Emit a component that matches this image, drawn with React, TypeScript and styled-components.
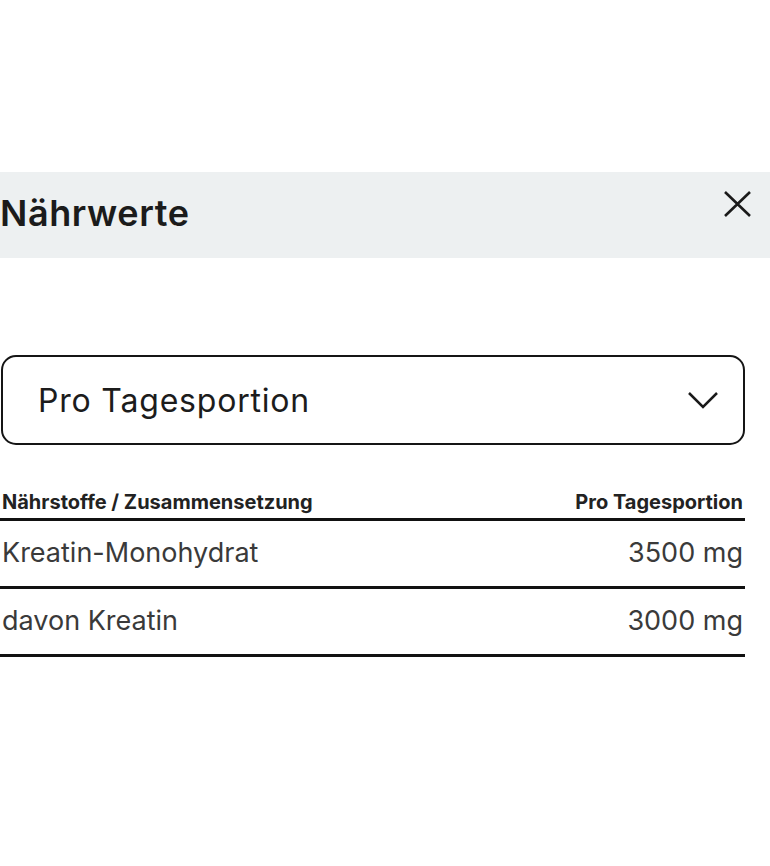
import React from "react";
import styled, { createGlobalStyle } from "styled-components";

const Global = createGlobalStyle`
  html, body { margin: 0; padding: 0; background: #ffffff; }
  body { font-family: Inter, "Noto Sans", Arial, sans-serif; color: #1a1a1a; }
  * { box-sizing: border-box; }
`;

const Page = styled.div`
  width: 770px;
  min-height: 866px;
  padding-top: 172px;
  overflow: hidden;
`;

const Header = styled.div`
  height: 86px;
  background: #edf0f1;
  display: flex;
  align-items: center;
  justify-content: space-between;
  padding: 0 18px 0 0;
`;

const Title = styled.h2`
  margin: -4px 0 0 0;
  font-size: 36px;
  font-weight: 600;
  letter-spacing: 0.6px;
  color: #1b1b1b;
`;

const CloseBtn = styled.button`
  border: 0;
  background: transparent;
  padding: 0;
  width: 30px;
  height: 30px;
  display: flex;
  align-items: center;
  justify-content: center;
  margin-top: -22px;
`;

const Body = styled.div`
  padding: 97px 25px 0 0;
`;

const Select = styled.div`
  height: 90px;
  margin-left: 1px;
  border: 2.5px solid #151515;
  border-radius: 15px;
  display: flex;
  align-items: center;
  justify-content: space-between;
  padding: 0 24px 0 35px;
`;

const SelectText = styled.span`
  font-size: 32px;
  font-weight: 400;
  letter-spacing: 0.8px;
  color: #1c1c1c;
`;

const Table = styled.div`
  margin-top: 44px;
`;

const Row = styled.div<{ $head?: boolean }>`
  display: flex;
  justify-content: space-between;
  align-items: ${(p) => (p.$head ? "flex-end" : "center")};
  border-bottom: 3px solid #111;
  height: ${(p) => (p.$head ? "32px" : "68px")};
  padding: ${(p) => (p.$head ? "0 2px 4px 2px" : "0 2px 2px 2px")};
`;

const Cell = styled.span<{ $head?: boolean }>`
  font-size: ${(p) => (p.$head ? "20px" : "27px")};
  font-weight: ${(p) => (p.$head ? 700 : 400)};
  color: ${(p) => (p.$head ? "#222" : "#3a3a3a")};
  letter-spacing: 0;
`;

const rows = [
  { name: "Kreatin-Monohydrat", value: "3500 mg" },
  { name: "davon Kreatin", value: "3000 mg" },
];

export default function App() {
  return (
    <Page>
      <Global />
      <Header>
        <Title>Nährwerte</Title>
        <CloseBtn aria-label="Schließen">
          <svg width="29" height="26" viewBox="0 0 29 26" fill="none">
            <path d="M2 1 L27 25 M27 1 L2 25" stroke="#1a1a1a" strokeWidth="2.6" />
          </svg>
        </CloseBtn>
      </Header>
      <Body>
        <Select>
          <SelectText>Pro Tagesportion</SelectText>
          <svg width="32" height="19" viewBox="0 0 32 19" fill="none">
            <path d="M2 2 L16 16 L30 2" stroke="#1a1a1a" strokeWidth="2.5" />
          </svg>
        </Select>
        <Table>
          <Row $head>
            <Cell $head>Nährstoffe / Zusammensetzung</Cell>
            <Cell $head>Pro Tagesportion</Cell>
          </Row>
          {rows.map((r) => (
            <Row key={r.name}>
              <Cell>{r.name}</Cell>
              <Cell>{r.value}</Cell>
            </Row>
          ))}
        </Table>
      </Body>
    </Page>
  );
}
